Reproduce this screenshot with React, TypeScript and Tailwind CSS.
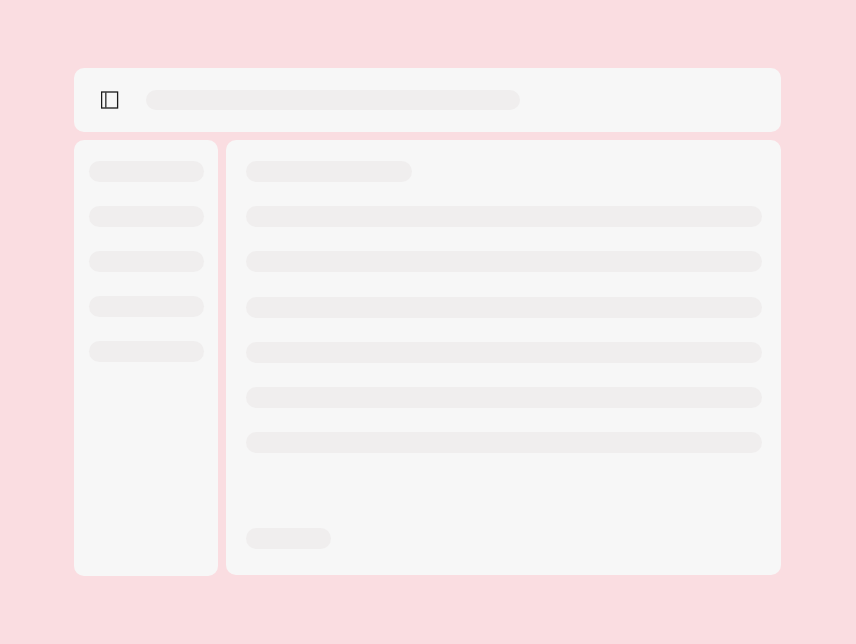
const SIDEBAR_ROWS = [0, 1, 2, 3, 4];
const MAIN_ROWS = [0, 1, 2, 3, 4, 5];

export default function App() {
  return (
    <div className="flex h-[644px] w-[856px] flex-col bg-[#fadde1] pl-[74.25px] pr-[75px] pt-[68px]">
      {/* Top bar */}
      <div className="flex h-[64px] items-center rounded-[10px] bg-[#f7f7f7] pl-[26.75px]">
        <svg width="18" height="18" viewBox="0 0 18 18" fill="none" className="shrink-0">
          <rect x="0.6" y="1" width="16" height="16" stroke="#1a1a1a" strokeWidth="1.3" />
          <line x1="4.8" y1="1" x2="4.8" y2="17" stroke="#444444" strokeWidth="1.5" />
        </svg>
        <div className="ml-[26.75px] h-[20px] w-[374px] rounded-full bg-[#f0eeee]" />
      </div>

      <div className="mt-[8px] flex gap-[8px]">
        {/* Sidebar */}
        <div className="flex h-[436px] w-[144px] flex-col gap-[24px] rounded-[10px] bg-[#f7f7f7] px-[14.75px] pt-[20.5px]">
          {SIDEBAR_ROWS.map((row) => (
            <div key={row} className="h-[21px] w-full rounded-full bg-[#f0eeee]" />
          ))}
        </div>

        {/* Main panel */}
        <div className="flex h-[435px] flex-1 flex-col rounded-[10px] bg-[#f7f7f7] pl-[19.75px] pr-[19px] pt-[21px]">
          <div className="h-[21px] w-[166px] rounded-full bg-[#f0eeee]" />
          {MAIN_ROWS.map((row) => (
            <div key={row} className="mt-[24.2px] h-[21px] w-full rounded-full bg-[#f0eeee]" />
          ))}
          <div className="mt-[75px] h-[21px] w-[85px] rounded-full bg-[#f0eeee]" />
        </div>
      </div>
    </div>
  );
}
